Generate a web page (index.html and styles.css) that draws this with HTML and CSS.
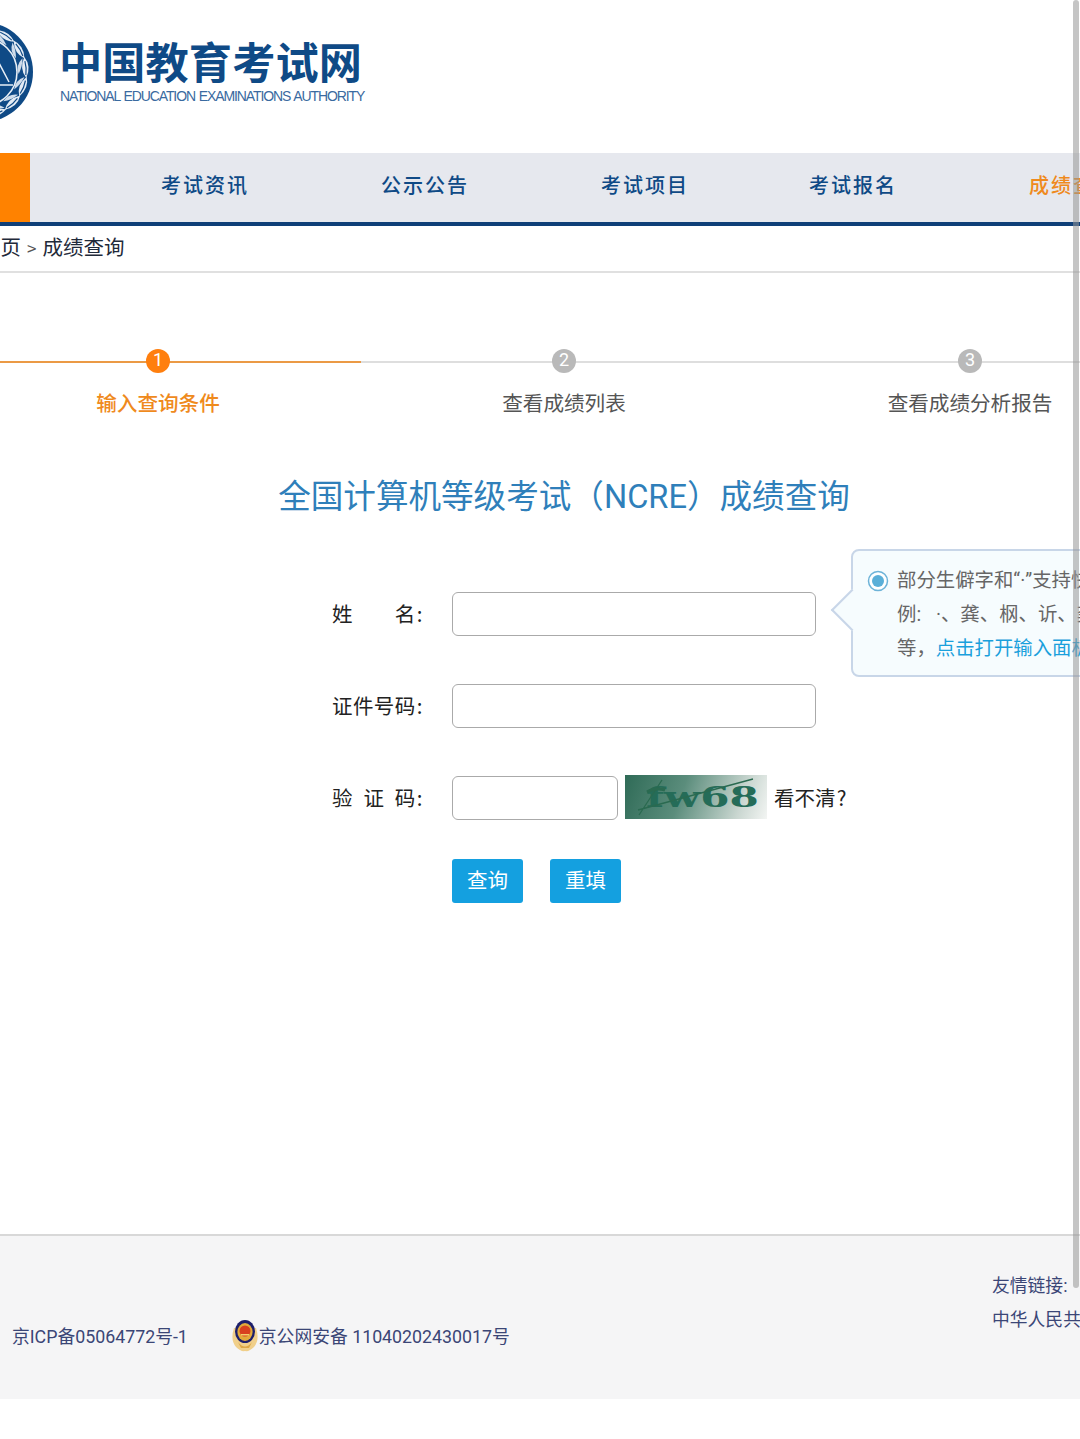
FILE: index.html
```html
<!DOCTYPE html>
<html lang="zh-CN">
<head>
<meta charset="utf-8">
<title>成绩查询</title>
<link rel="stylesheet" href="styles.css">
</head>
<body>
<div class="page">
  <header class="header">
    <svg class="emblem" viewBox="0 0 100 100" width="100" height="100" aria-hidden="true">
      <defs>
        <path id="leaf" d="M41 7Q51 1 62 8Q52 14 41 7Z" fill="#e4ecf5"/>
        <path id="leaf-inner" d="M42 9Q50 10 57 15Q48 17 42 9Z" fill="#cfdcea"/>
        <path id="vein" d="M45 7Q52 6 59 8" fill="none" stroke="#0f4a86" stroke-width="1.2"/>
        <g id="leafset"><use href="#leaf"/><use href="#leaf-inner"/><use href="#vein"/></g>
      </defs>
      <circle cx="50" cy="50" r="50" fill="#0f4a86"/>
      <use href="#leafset" transform="rotate(30 50 50)"/>
      <use href="#leafset" transform="rotate(56 50 50)"/>
      <use href="#leafset" transform="rotate(82 50 50)"/>
      <use href="#leafset" transform="rotate(108 50 50)"/>
      <use href="#leafset" transform="rotate(134 50 50)"/>
      <use href="#leafset" transform="rotate(160 50 50)"/>
      <circle cx="50" cy="50" r="34" fill="#0f4a86" stroke="#e9eff6" stroke-width="1.6"/>
      <path d="M66 41L76 60M66 63H80" fill="none" stroke="#e9eff6" stroke-width="1.5"/>
    </svg>
    <div class="brand">
      <div class="brand-cn">中国教育考试网</div>
      <div class="brand-en">NATIONAL EDUCATION EXAMINATIONS AUTHORITY</div>
    </div>
  </header>

  <nav class="nav">
    <span class="nav-home"></span>
    <a class="nav-item">考试资讯</a>
    <a class="nav-item">公示公告</a>
    <a class="nav-item nav-item-tight">考试项目</a>
    <a class="nav-item">考试报名</a>
    <a class="nav-item nav-item-active">成绩查询</a>
  </nav>

  <div class="crumbs">首页<span class="crumb-sep">&gt;</span>成绩查询</div>

  <main class="main">
    <div class="steps">
      <div class="step step-active"><span class="step-dot">1</span><span class="step-label">输入查询条件</span></div>
      <div class="step"><span class="step-dot">2</span><span class="step-label">查看成绩列表</span></div>
      <div class="step"><span class="step-dot">3</span><span class="step-label">查看成绩分析报告</span></div>
    </div>

    <h1 class="title">全国计算机等级考试（NCRE）成绩查询</h1>

    <form class="form">
      <div class="row">
        <label class="field-label"><span>姓</span><span>名:</span></label>
        <input class="input" type="text">
      </div>
      <div class="row">
        <label class="field-label"><span>证</span><span>件</span><span>号</span><span>码:</span></label>
        <input class="input" type="text">
      </div>
      <div class="row row-last">
        <label class="field-label"><span>验</span><span>证</span><span>码:</span></label>
        <input class="input input-short" type="text">
        <div class="captcha"><span class="captcha-text">fw68</span>
          <svg class="captcha-lines" viewBox="0 0 142 44" width="142" height="44" aria-hidden="true">
            <path d="M14 40L37 5M13 35L128 4" fill="none" stroke="#2a6a50" stroke-width="1.3"/>
            <path d="M22 17Q30 12 40 15" fill="none" stroke="#2a6a50" stroke-width="3"/>
          </svg>
        </div>
        <a class="refresh">看不清&#8202;?</a>
      </div>
      <div class="actions">
        <button class="btn" type="button">查询</button>
        <button class="btn" type="button">重填</button>
      </div>

      <aside class="tip">
        <svg class="tip-icon" viewBox="0 0 22 22" width="22" height="22" aria-hidden="true">
          <circle cx="11" cy="11" r="9.5" fill="#fff" stroke="#6db3d8" stroke-width="1.5"/>
          <circle cx="11" cy="11" r="6" fill="#5aafd8"/>
        </svg>
        <div class="tip-text">
          <p>部分生僻字和“·”支持快速输入</p>
          <p>例:&#8194;&#8197;·、龚、㭎、䜣、䶮</p>
          <p>等，<a class="tip-link">点击打开输入面板</a></p>
        </div>
      </aside>
    </form>
  </main>

  <footer class="footer">
    <div class="footer-left">
      <span>京ICP备05064772号-1</span>
      <span class="beian">
        <svg class="badge" viewBox="0 0 28 32" width="28" height="32" aria-hidden="true">
          <path d="M3 8Q-1 20 5 27Q10 32 14 31Q18 32 23 27Q29 20 25 8Z" fill="#f0cf8a"/>
          <path d="M7 22Q14 31 21 22L18 28H10Z" fill="#dca645"/>
          <ellipse cx="14" cy="11.5" rx="10" ry="11.5" fill="#1d1f6b"/>
          <ellipse cx="14" cy="12" rx="7.6" ry="9" fill="#e2a93b"/>
          <circle cx="14" cy="11" r="5.5" fill="#d8401f"/>
          <path d="M10 14h8v1.5h-8z" fill="#f3cf6d"/>
        </svg>京公网安备 11040202430017号</span>
    </div>
    <div class="footer-right">
      <div>友情链接:</div>
      <div>中华人民共和国教育部</div>
    </div>
  </footer>

  <div class="scrollbar"></div>
</div>
</body>
</html>
```
FILE: styles.css
```css
* { box-sizing: border-box; }
html, body { margin: 0; padding: 0; background: #fff; }
body { font-family: Roboto, "Noto Sans CJK SC", sans-serif; color: #222; }

.page { position: relative; width: 1080px; height: 1439px; overflow: hidden; background: #fff; }

.header { height: 153px; display: flex; align-items: flex-start; padding-top: 22px; }
.emblem { margin-left: -67px; flex: none; }
.brand { margin-left: 27px; padding-top: 13px; white-space: nowrap; }
.brand-cn { font-family: "Noto Sans CJK SC", sans-serif; font-size: 43.2px; line-height: 50px; font-weight: 700; color: #0f4a86; margin-left: -1px; letter-spacing: 0.1px; }
.brand-en { font-family: "Liberation Sans", sans-serif; font-size: 14px; line-height: 18px; letter-spacing: -1.1px; word-spacing: 1px; color: #3a6aa0; margin-top: 2px; }

.nav { height: 73px; display: flex; background: #e6e8ee; border-bottom: 4px solid #0f3f78; white-space: nowrap; font-family: "Noto Sans CJK SC", sans-serif; }
.nav-home { flex: none; width: 30px; background: #ff8200; margin-right: 131px; }
.nav-item { flex: none; margin-right: 132px; font-size: 20px; font-weight: 500; letter-spacing: 2px; line-height: 64px; color: #0f4a86; }
.nav-item-tight { margin-right: 120px; }
.nav-item-active { color: #ef8a1d; }

.crumbs { height: 47px; margin-left: -20px; border-bottom: 2px solid #e0e0e0; font-size: 20.5px; line-height: 40px; color: #1f2a3a; white-space: nowrap; font-family: "Noto Sans CJK SC", sans-serif; width: 1100px; }
.crumb-sep { font-size: 17px; color: #555; margin: 0 6px; }

.main { height: 961px; }

.steps { display: grid; grid-template-columns: repeat(3, 406px); margin-left: -45px; padding-top: 76px; width: 1218px; }
.step { position: relative; display: flex; flex-direction: column; align-items: center; }
.step::before { content: ""; position: absolute; left: 0; right: 0; top: 12px; height: 2px; background: #dedede; }
.step-active::before { background: #eb9a45; }
.step-dot { position: relative; width: 24px; height: 24px; border-radius: 50%; background: #b9b9b9; color: #fff; font-size: 18px; line-height: 22px; text-align: center; font-family: Roboto, sans-serif; }
.step-active .step-dot { background: #ff7f0e; }
.step-label { margin-top: 14px; font-size: 20.6px; line-height: 30px; color: #555; font-family: "Noto Sans CJK SC", sans-serif; }
.step-active .step-label { color: #ef8a1d; font-weight: 500; }

.title { margin: 55px 0 0; width: 1128px; text-align: center; font-size: 32.6px; line-height: 50px; font-weight: 400; color: #2f7fba; font-family: Roboto, "Noto Sans CJK SC", sans-serif; white-space: nowrap; }

.form { position: relative; margin-top: 70px; padding-left: 332px; font-family: "Noto Sans CJK SC", sans-serif; }
.row { display: flex; align-items: center; height: 44px; margin-bottom: 48px; }
.row-last { margin-bottom: 39px; }
.field-label { flex: none; width: 92px; margin-right: 28px; padding-bottom: 3px; display: flex; justify-content: space-between; font-size: 20.5px; color: #222; }
.field-label span:last-child { letter-spacing: 1.5px; }
.input { width: 364px; height: 44px; border: 1px solid #aaa; border-radius: 6px; background: #fff; padding: 0 8px; outline: none; }
.input-short { width: 166px; }
.captcha { position: relative; flex: none; width: 142px; height: 44px; margin: -2px 0 0 7px; background: linear-gradient(110deg, #2f6b57 0%, #5b8d7c 40%, #c9d6d0 80%, #f3f5f3 100%); overflow: hidden; }
.captcha-text { position: absolute; left: 21px; top: 1px; font-family: "DejaVu Serif", serif; font-weight: 700; font-size: 28px; line-height: 44px; color: #256c58; transform: scaleX(1.5); transform-origin: left center; }
.captcha-lines { position: absolute; left: 0; top: 0; }
.refresh { margin-left: 7px; padding-bottom: 3px; font-size: 20.5px; color: #222; white-space: nowrap; }

.actions { display: flex; gap: 27px; margin-left: 120px; }
.btn { width: 71px; height: 44px; border: 0; border-radius: 3px; background: #14a0e0; color: #fff; font-size: 20.5px; line-height: 38px; padding: 0 0 5px; font-family: "Noto Sans CJK SC", sans-serif; }

.tip { position: absolute; left: 851px; top: -43px; width: 300px; height: 128px; border: 2px solid #c8d6e8; border-radius: 8px; background: #f6fcfe; display: flex; padding: 13px 0 0 14px; white-space: nowrap; }
.tip::before { content: ""; position: absolute; left: -16px; top: 44px; width: 28px; height: 28px; background: #f6fcfe; border-left: 2px solid #c8d6e8; border-bottom: 2px solid #c8d6e8; transform: rotate(45deg); }
.tip-icon { position: relative; flex: none; margin: 6px 8px 0 0; }
.tip-text { position: relative; font-family: Roboto, "Noto Sans CJK SC", sans-serif; font-size: 19.4px; color: #666; }
.tip-text p { margin: 0; height: 34px; line-height: 34px; }
.tip-link { color: #1aa0dc; }

.footer { height: 165px; display: flex; background: #f5f5f6; border-top: 2px solid #d8d8d8; font-size: 17.8px; color: #3b4676; white-space: nowrap; font-family: Roboto, "Noto Sans CJK SC", sans-serif; }
.footer-left { flex: none; width: 992px; display: flex; gap: 43px; padding: 86px 0 0 12px; line-height: 30px; }
.beian { display: flex; align-items: center; height: 30px; }
.badge { flex: none; margin-top: -3px; }
.footer-right { flex: none; padding-top: 33px; line-height: 34px; }

.scrollbar { position: absolute; right: 1px; top: 0; width: 6px; height: 1288px; border-radius: 3px; background: rgba(150, 150, 150, 0.55); }
```
